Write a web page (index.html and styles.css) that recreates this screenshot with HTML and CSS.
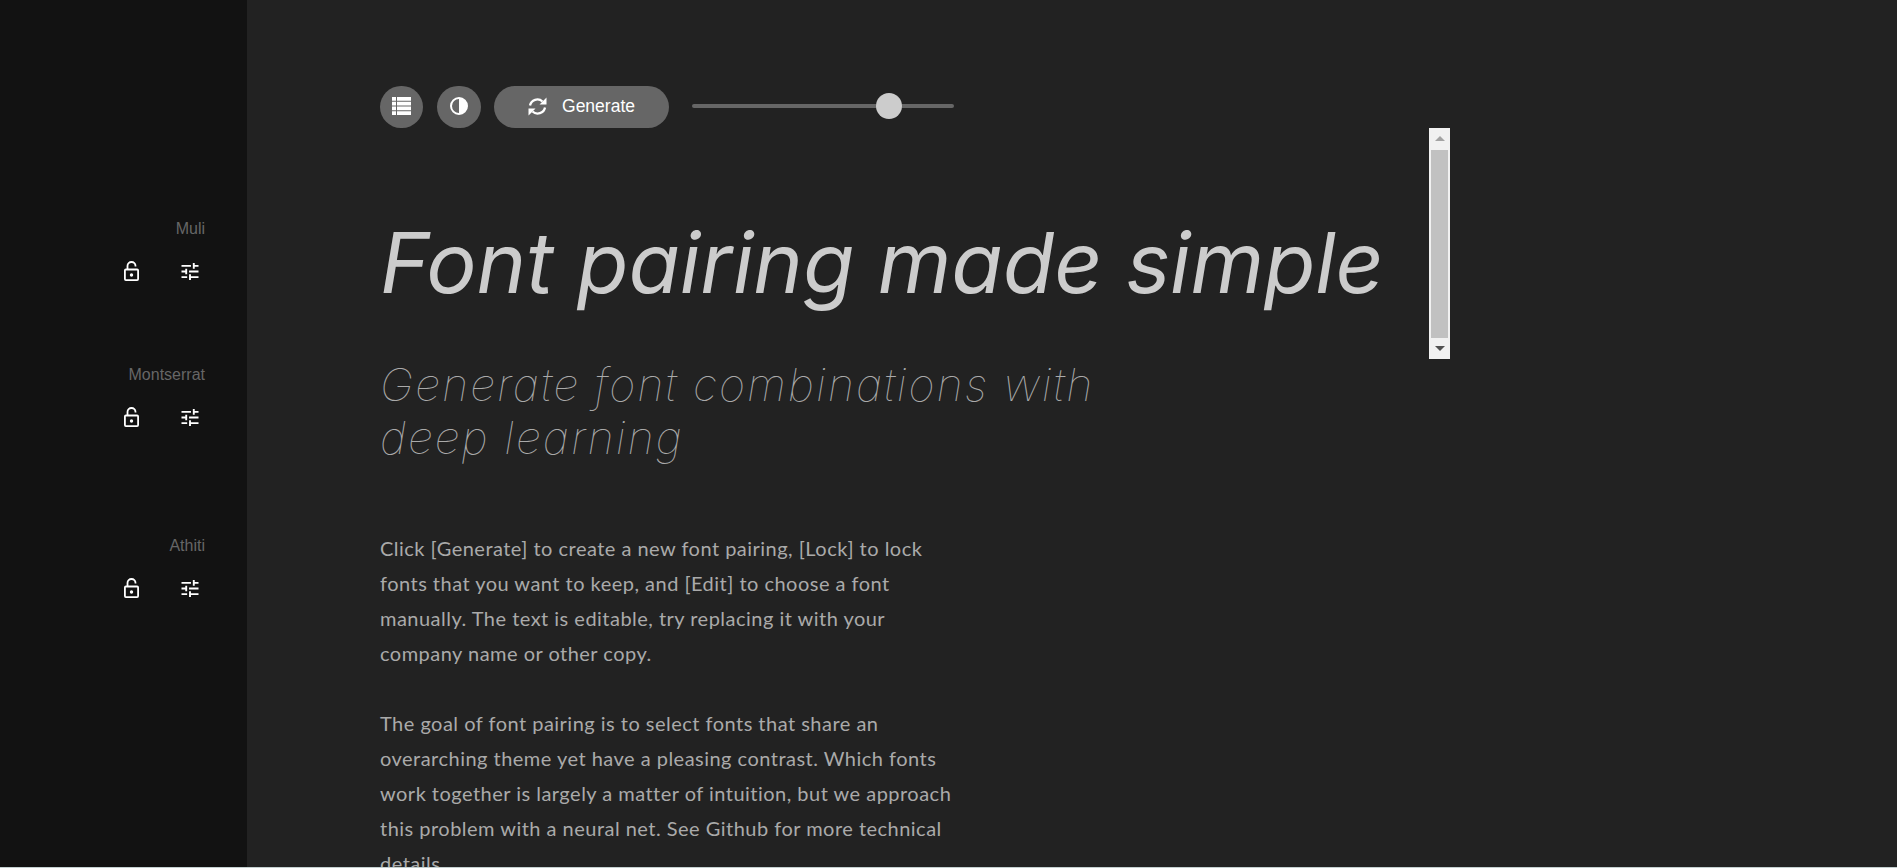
FILE: index.html
```html
<!DOCTYPE html>
<html lang="en">
<head>
  <meta charset="UTF-8" />
  <title>Font pairing</title>
  <link rel="stylesheet" href="styles.css">
</head>
<body>
  <div class="page">
    <aside class="sidebar">
      <div class="font-ctl">
        <div class="font-name">Muli</div>
        <div class="font-icons">
          <svg class="ico-lock" viewBox="0 0 15 20"><path d="M3.500 8.500V5a4 4 0 0 1 8 0v.5" fill="none" stroke="#fff" stroke-width="1.800"/><rect x=".9" y="8.500" width="13.200" height="10.600" rx="1" fill="none" stroke="#fff" stroke-width="1.800"/><circle cx="7.500" cy="14" r="1.700" fill="#fff"/></svg>
          <svg class="ico-tune" viewBox="3 3 18 18"><path d="M3 17v2h6v-2H3zM3 5v2h10V5H3zm10 16v-2h8v-2h-8v-2h-2v6h2zM7 9v2H3v2h4v2h2V9H7zm14 4v-2H11v2h10zm-6-4h2V7h4V5h-4V3h-2v6z" fill="#fff"/></svg>
        </div>
      </div>
      <div class="font-ctl ctl-sub">
        <div class="font-name">Montserrat</div>
        <div class="font-icons">
          <svg class="ico-lock" viewBox="0 0 15 20"><path d="M3.500 8.500V5a4 4 0 0 1 8 0v.5" fill="none" stroke="#fff" stroke-width="1.800"/><rect x=".9" y="8.500" width="13.200" height="10.600" rx="1" fill="none" stroke="#fff" stroke-width="1.800"/><circle cx="7.500" cy="14" r="1.700" fill="#fff"/></svg>
          <svg class="ico-tune" viewBox="3 3 18 18"><path d="M3 17v2h6v-2H3zM3 5v2h10V5H3zm10 16v-2h8v-2h-8v-2h-2v6h2zM7 9v2H3v2h4v2h2V9H7zm14 4v-2H11v2h10zm-6-4h2V7h4V5h-4V3h-2v6z" fill="#fff"/></svg>
        </div>
      </div>
      <div class="font-ctl ctl-body">
        <div class="font-name">Athiti</div>
        <div class="font-icons">
          <svg class="ico-lock" viewBox="0 0 15 20"><path d="M3.500 8.500V5a4 4 0 0 1 8 0v.5" fill="none" stroke="#fff" stroke-width="1.800"/><rect x=".9" y="8.500" width="13.200" height="10.600" rx="1" fill="none" stroke="#fff" stroke-width="1.800"/><circle cx="7.500" cy="14" r="1.700" fill="#fff"/></svg>
          <svg class="ico-tune" viewBox="3 3 18 18"><path d="M3 17v2h6v-2H3zM3 5v2h10V5H3zm10 16v-2h8v-2h-8v-2h-2v6h2zM7 9v2H3v2h4v2h2V9H7zm14 4v-2H11v2h10zm-6-4h2V7h4V5h-4V3h-2v6z" fill="#fff"/></svg>
        </div>
      </div>
    </aside>

    <main class="content">
      <div class="toolbar">
        <button class="round-btn">
          <svg width="19" height="18" viewBox="0 0 19 18"><path d="M0 0h4v3.750H0zM5 0h14v3.750H5zM0 4.750h4v3.750H0zM5 4.750h14v3.750H5zM0 9.500h4v3.750H0zM5 9.500h14v3.750H5zM0 14.250h4V18H0zM5 14.250h14V18H5z" fill="#fff"/></svg>
        </button>
        <button class="round-btn contrast-btn">
          <svg width="18" height="18" viewBox="0 0 18 18"><circle cx="9" cy="9" r="8" fill="none" stroke="#fff" stroke-width="2"/><path d="M9 1a8 8 0 0 1 0 16z" fill="#fff"/></svg>
        </button>
        <button class="gen-btn">
          <svg width="19" height="19" viewBox="0 0 19 19"><path d="M2 8.500A7.500 7.500 0 0 1 14.500 4.500M17 10.500A7.500 7.500 0 0 1 4.500 14.500" fill="none" stroke="#fff" stroke-width="2.300"/><path d="M18.500.5v7h-7zM.5 18.500v-7h7z" fill="#fff"/></svg>
          <span>Generate</span>
        </button>
        <div class="slider"><div class="thumb"></div></div>
      </div>

      <div class="hero">
        <h1>Font pairing made simple</h1>
        <div class="scrollbar">
          <div class="arrow-up"></div>
          <div class="sb-thumb"></div>
          <div class="arrow-down"></div>
        </div>
      </div>

      <h2>Generate font combinations with deep learning</h2>

      <div class="copy">
        <p>Click [Generate] to create a new font pairing, [Lock] to lock fonts that you want to keep, and [Edit] to choose a font manually. The text is editable, try replacing it with your company name or other copy.</p>
        <p>The goal of font pairing is to select fonts that share an overarching theme yet have a pleasing contrast. Which fonts work together is largely a matter of intuition, but we approach this problem with a neural net. See Github for more technical details.</p>
      </div>
    </main>
  </div>
</body>
</html>
```

FILE: styles.css
```css
html, body {
  margin: 0;
  height: 868px;
  overflow: hidden;
  background: #c4d0d0;
}

.page {
  display: flex;
  height: 867px;
  overflow: hidden;
  background: #222222;
}

.sidebar {
  width: 247px;
  flex-shrink: 0;
  background: #121212;
  box-sizing: border-box;
  padding: 220px 42px 0 0;
}

.font-ctl {
  text-align: right;
}

.ctl-sub {
  margin-top: 85px;
}

.ctl-body {
  margin-top: 110px;
}

.font-name {
  font-family: "Liberation Sans", sans-serif;
  font-size: 16px;
  line-height: 18px;
  color: #666;
}

.font-icons {
  display: flex;
  justify-content: flex-end;
  align-items: center;
  gap: 42px;
  height: 20px;
  margin-top: 23px;
  padding-right: 6px;
}

.ico-lock {
  width: 15px;
  height: 20px;
}

.ico-tune {
  width: 18px;
  height: 17px;
}

.content {
  flex: 1;
  padding: 86px 0 0 133px;
}

.toolbar {
  display: flex;
  align-items: center;
  height: 42px;
}

.round-btn,
.gen-btn {
  display: flex;
  align-items: center;
  justify-content: center;
  height: 42px;
  border: 0;
  border-radius: 21px;
  background: #666;
  padding: 0 0 2px;
}

.round-btn {
  width: 43px;
  margin-right: 14px;
}

.contrast-btn {
  width: 44px;
  margin-right: 13px;
}

.gen-btn {
  width: 175px;
  gap: 15px;
  color: #fff;
  font-family: "Liberation Sans", sans-serif;
  font-size: 17.5px;
}

.slider {
  position: relative;
  width: 262px;
  height: 4px;
  margin: -2px 0 0 23px;
  border-radius: 2px;
  background: #666;
}

.thumb {
  position: absolute;
  left: 184px;
  top: -11px;
  width: 26px;
  height: 26px;
  border-radius: 50%;
  background: #ccc;
}

.hero {
  display: flex;
  height: 231px;
}

h1 {
  width: 1049px;
  margin: 0;
  padding-top: 90px;
  box-sizing: border-box;
  font-family: "Inter", sans-serif;
  font-size: 84px;
  font-style: italic;
  font-weight: 380;
  letter-spacing: -.1px;
  line-height: 90px;
  color: #ccc;
  white-space: nowrap;
}

.scrollbar {
  display: flex;
  flex-direction: column;
  align-items: center;
  justify-content: space-between;
  width: 21px;
  height: 231px;
  background: #f1f1f1;
}

.sb-thumb {
  width: 17px;
  height: 188px;
  background: #c1c1c1;
}

.arrow-up,
.arrow-down {
  width: 0;
  height: 0;
  margin: 8px 0;
  border-left: 5px solid transparent;
  border-right: 5px solid transparent;
}

.arrow-up {
  border-bottom: 5px solid #a3a3a3;
}

.arrow-down {
  border-top: 5px solid #505050;
}

h2 {
  width: 760px;
  margin: -1px 0 0;
  font-family: "Inter", sans-serif;
  font-size: 45px;
  font-style: italic;
  font-weight: 100;
  letter-spacing: 1.95px;
  line-height: 53px;
  color: #aaa;
}

.copy {
  width: 580px;
  margin-top: 67px;
  font-family: "Lato", sans-serif;
  font-size: 20px;
  letter-spacing: .48px;
  line-height: 35px;
  color: #aaa;
}

.copy p {
  margin: 0 0 35px;
}
```
